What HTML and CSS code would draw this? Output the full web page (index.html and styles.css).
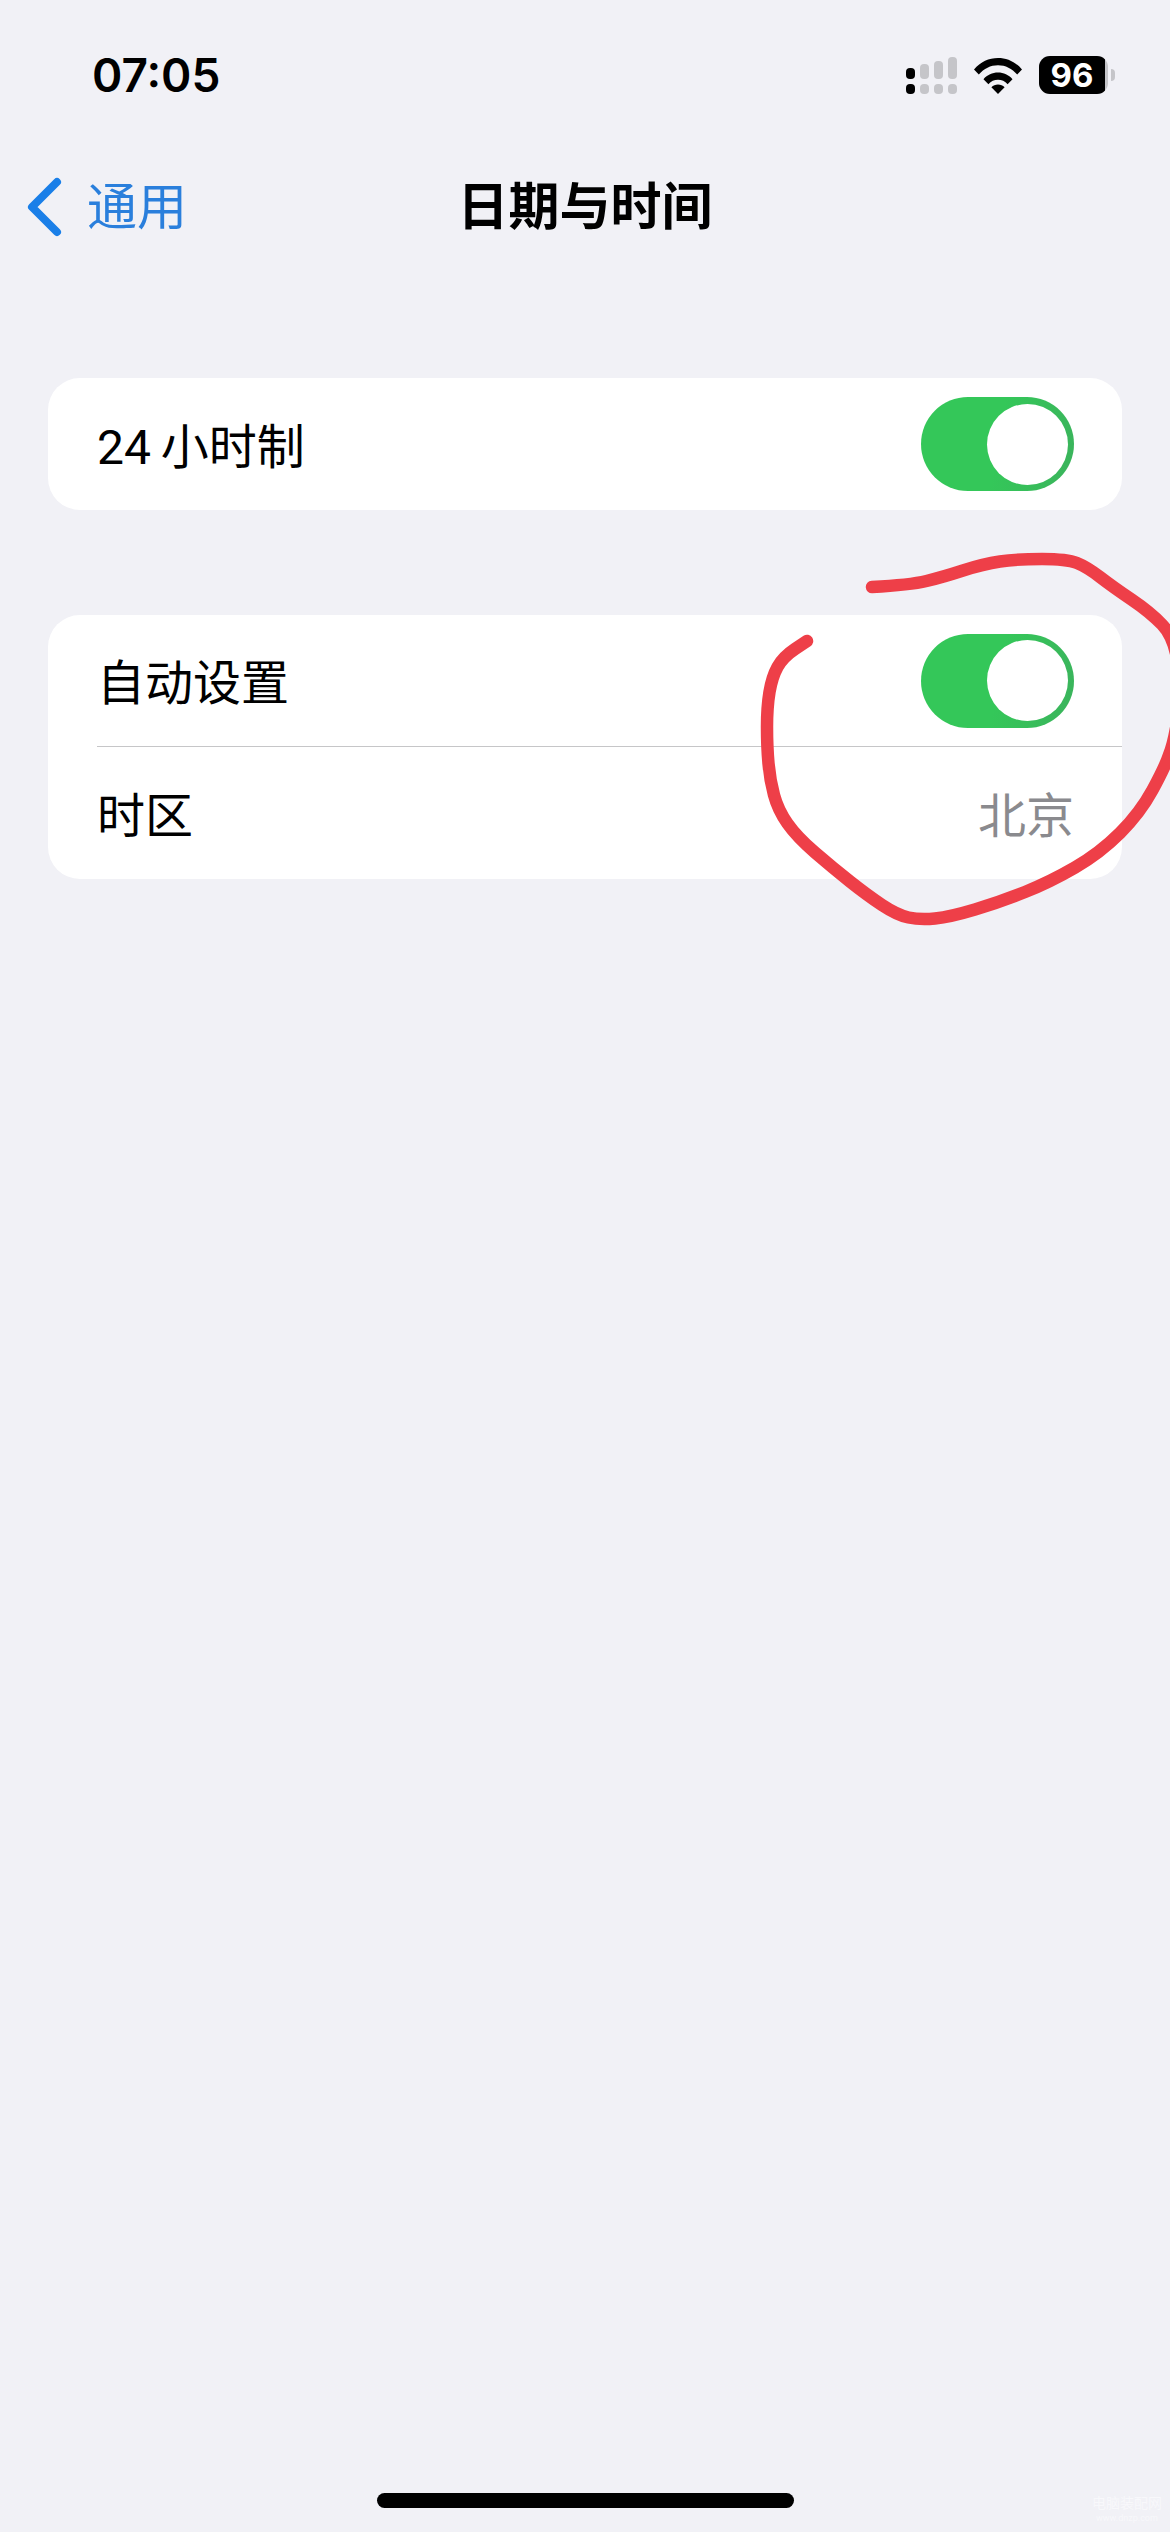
FILE: index.html
```html
<!DOCTYPE html>
<html lang="zh-CN">

<head>
    <meta charset="UTF-8">
    <meta name="viewport" content="width=device-width, initial-scale=1.0">
    <title>日期与时间</title>
    <link rel="stylesheet" href="styles.css">
</head>

<body>
    <div class="page">
        <!-- 状态栏 -->
        <div class="status">
            <span class="time">07:05</span>
            <div class="status-icons">
                <div class="signal">
                    <div class="signal-col"><i class="top on h1"></i><i class="low on"></i></div>
                    <div class="signal-col"><i class="top h2"></i><i class="low"></i></div>
                    <div class="signal-col"><i class="top h3"></i><i class="low"></i></div>
                    <div class="signal-col"><i class="top h4"></i><i class="low"></i></div>
                </div>
                <svg class="wifi" width="48" height="37" viewBox="0 0 48 37">
                    <path d="M0 12.5C6.500 4.800 15 1 24 1s17.500 3.800 24 11.500l-4.800 5C38 11.500 31.500 8.200 24 8.200S10 11.500 4.800 17.500z" />
                    <path d="M9.500 22.200C13.300 18 18.400 15.600 24 15.600s10.700 2.400 14.500 6.600l-4.900 5C31 24.300 27.700 22.800 24 22.800s-7 1.500-9.600 4.400z" />
                    <path d="M24 37l-6.600-6.800c1.800-1.800 4-2.700 6.600-2.700s4.800.9 6.600 2.700z" />
                </svg>
                <div class="battery">
                    <div class="battery-body">
                        <div class="battery-fill">96</div>
                    </div>
                    <div class="battery-cap"></div>
                </div>
            </div>
        </div>

        <!-- 导航 -->
        <div class="nav">
            <div class="back">
                <svg class="chevron" width="38" height="60" viewBox="0 0 38 60">
                    <path d="M32 5L7 30l25 25" />
                </svg>
                <span class="back-text">通用</span>
            </div>
            <div class="title">日期与时间</div>
            <div></div>
        </div>

        <div class="main">
            <div class="card">
                <div class="row">
                    <span>24&#8201;小时制</span>
                    <div class="switch"><div class="knob"></div></div>
                </div>
            </div>
            <div class="card">
                <div class="row line">
                    <span>自动设置</span>
                    <div class="switch"><div class="knob"></div></div>
                </div>
                <div class="row">
                    <span>时区</span>
                    <span class="value">北京</span>
                </div>
            </div>
        </div>

        <div class="home-bar"></div>

        <div class="mark">
            <div>电脑装配网</div>
            <div class="mark-url">www.dnzp.com</div>
        </div>

        <!-- 手绘红圈 -->
        <svg class="scribble" width="1170" height="2532" viewBox="0 0 1170 2532">
            <path d="M872 587Q910 585 926.500 581Q943 577 963 570.500Q983 564 1000 561.500Q1017 559 1042 559Q1067 559 1077 563Q1087 567 1100 577Q1113 587 1131.500 599.500Q1150 612 1162 624.500Q1174 637 1178 663.500Q1182 690 1178 716.500Q1174 743 1169 755Q1165 767 1152.500 790Q1140 813 1120 833Q1100 853 1075 867.500Q1050 882 1025 892Q1000 902 975 909.500Q950 917 935 918.500Q920 920 908.500 917.500Q897 915 882 905Q867 895 850 881.500Q833 868 815 852.500Q797 837 787.500 823.500Q778 810 774 795Q770 780 768.500 763.500Q767 747 767 727Q767 707 769.500 692Q772 677 777.500 667Q783 657 795 649L807 641" />
        </svg>
    </div>
</body>

</html>
```

FILE: styles.css
```css
* {
    margin: 0;
    padding: 0;
    box-sizing: border-box;
}

html,
body {
    width: 100%;
    height: 100%;
}

body {
    background: #f1f1f6;
    color: #000;
    font-family: Roboto, "Noto Sans CJK SC", sans-serif;
    font-size: 48px;
}

.page {
    position: relative;
    display: flex;
    flex-direction: column;
    height: 2532px;
    overflow: hidden;
}

.status {
    display: flex;
    align-items: center;
    justify-content: space-between;
    height: 150px;
    padding: 0 55px 0 92px;
}

.time {
    font-family: Inter, sans-serif;
    font-size: 46px;
    font-weight: 600;
}

.status-icons {
    display: flex;
    align-items: center;
    gap: 17px;
}

.signal {
    display: flex;
    align-items: flex-end;
    gap: 5px;
}

.signal-col {
    display: flex;
    flex-direction: column;
    justify-content: flex-end;
    gap: 5px;
    width: 9px;
}

.signal-col i {
    display: block;
    background: #c5c5c9;
    border-radius: 4px;
}

.signal-col i.on {
    background: #000;
}

.signal-col .low {
    height: 10px;
}

.signal-col .h1 {
    height: 11px;
}

.signal-col .h2 {
    height: 15px;
}

.signal-col .h3 {
    height: 18px;
}

.signal-col .h4 {
    height: 22px;
}

.wifi {
    fill: #000;
}

.battery {
    display: flex;
    align-items: center;
    gap: 3px;
}

.battery-body {
    width: 69px;
    height: 38px;
    background: #c5c5c9;
    border-radius: 11px;
    overflow: hidden;
}

.battery-fill {
    width: 66px;
    height: 38px;
    background: #000;
    color: #fff;
    font-family: Inter, sans-serif;
    font-size: 33px;
    font-weight: 700;
    line-height: 38px;
    text-align: center;
}

.battery-cap {
    width: 4px;
    height: 12px;
    background: #c5c5c9;
    border-radius: 0 4px 4px 0;
}

.nav {
    display: grid;
    grid-template-columns: 1fr auto 1fr;
    align-items: center;
    height: 114px;
}

.back {
    display: flex;
    align-items: center;
    gap: 24px;
    padding-left: 25px;
    color: #2a7fdc;
}

.back-text {
    margin-bottom: 8px;
    font-size: 50px;
}

.chevron {
    fill: none;
    stroke: #1a7fe8;
    stroke-width: 8;
    stroke-linecap: round;
    stroke-linejoin: round;
}

.title {
    margin-bottom: 8px;
    font-size: 51px;
    font-weight: 600;
}

.main {
    display: flex;
    flex-direction: column;
    flex: 1;
    gap: 105px;
    padding: 114px 48px 0;
}

.card {
    background: #fff;
    border-radius: 32px;
}

.row {
    display: flex;
    align-items: center;
    justify-content: space-between;
    height: 132px;
    margin-left: 49px;
    padding-right: 48px;
}

.row span {
    margin-bottom: 3px;
}

.line {
    border-bottom: 1px solid #c6c6c8;
}

.value {
    color: #8a8a8e;
}

.switch {
    display: flex;
    align-items: center;
    justify-content: flex-end;
    width: 153px;
    height: 94px;
    padding-right: 6px;
    background: linear-gradient(100deg, #34c759 50%, #3bb35c 100%);
    border-radius: 47px;
}

.knob {
    width: 81px;
    height: 81px;
    background: #fff;
    border-radius: 50%;
}

.home-bar {
    width: 417px;
    height: 15px;
    margin: 0 auto 24px;
    background: #000;
    border-radius: 8px;
}

/* 右下角水印 */
.mark {
    position: absolute;
    right: 8px;
    bottom: 8px;
    color: #f8f8fb;
    font-size: 14px;
    line-height: 18px;
    text-align: center;
}

.mark-url {
    font-size: 9px;
    line-height: 12px;
}

.scribble {
    position: absolute;
    top: 0;
    left: 0;
    fill: none;
    stroke: #ee3f48;
    stroke-width: 12.5;
    stroke-linecap: round;
    stroke-linejoin: round;
}
```
